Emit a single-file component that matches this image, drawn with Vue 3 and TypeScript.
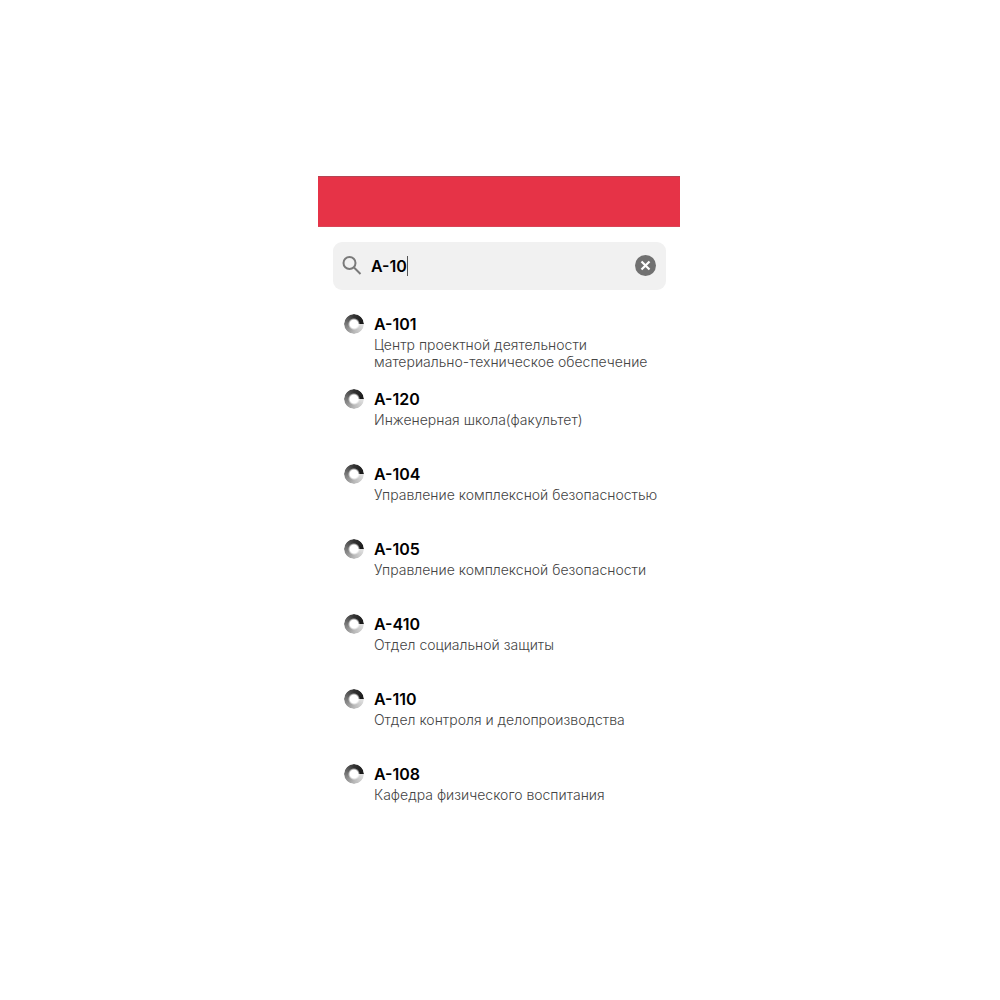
<script setup lang="ts">
import { ref } from 'vue'

interface Room {
  code: string
  name: string
}

const query = ref<string>('А-10')

const rooms: Room[] = [
  { code: 'А-101', name: 'Центр проектной деятельности материально-техническое обеспечение' },
  { code: 'А-120', name: 'Инженерная школа(факультет)' },
  { code: 'А-104', name: 'Управление комплексной безопасностью' },
  { code: 'А-105', name: 'Управление комплексной безопасности' },
  { code: 'А-410', name: 'Отдел социальной защиты' },
  { code: 'А-110', name: 'Отдел контроля и делопроизводства' },
  { code: 'А-108', name: 'Кафедра физического воспитания' },
]
</script>

<template>
  <div class="page">
    <main class="screen">
      <header class="bar"></header>
      <form class="search" @submit.prevent>
        <label class="field">
          <svg class="lens" viewBox="0 0 20 20" aria-hidden="true">
            <circle cx="7.5" cy="7" r="6" />
            <path d="M12 11.5l6.5 6.5" />
          </svg>
          <input v-model="query" class="query" type="text" aria-label="Поиск" />
          <span class="caret"></span>
        </label>
        <button class="clear" type="button" aria-label="Очистить" @click="query = ''">
          <svg viewBox="0 0 21 22" aria-hidden="true">
            <circle cx="10.5" cy="10.5" r="10.5" />
            <path d="M6.5 6.5l8 8M14.500 6.500l-8 8" />
          </svg>
        </button>
      </form>
      <ul class="rooms">
        <li v-for="room in rooms" :key="room.code" class="room">
          <span class="ring"></span>
          <div class="info">
            <h2 class="code">{{ room.code }}</h2>
            <p class="name">{{ room.name }}</p>
          </div>
        </li>
      </ul>
    </main>
  </div>
</template>

<style>
body {
  background: #ffffff;
}
</style>

<style scoped>
.page {
  padding: 176px 16px 16px 14px;
  font-family: Inter, "Noto Sans", sans-serif;
}
.screen {
  max-width: 362px;
  margin: 0 auto;
}
.bar {
  box-sizing: border-box;
  height: 51px;
  background: #e63347;
  border-top: 1px solid #b34453;
  border-bottom: 1px solid #d94557;
}
.search {
  display: flex;
  align-items: center;
  height: 48px;
  margin: 15px 14px 0 15px;
  padding: 0 10px 0 9px;
  box-sizing: border-box;
  border-radius: 9px;
  background: #f1f1f1;
}
.field {
  display: flex;
  flex: 1;
  align-items: center;
  min-width: 0;
}
.lens {
  width: 20px;
  height: 20px;
  margin-right: 9px;
  fill: none;
  stroke: #7a7a7a;
  stroke-width: 2;
}
.query {
  field-sizing: content;
  padding: 0;
  border: 0;
  outline: 0;
  background: transparent;
  color: #000000;
  caret-color: transparent;
  font: 600 16px/20px Inter, "Noto Sans", sans-serif;
}
.caret {
  width: 1px;
  height: 20px;
  background: #555555;
}
.clear {
  width: 21px;
  height: 22px;
  padding: 0;
  border: 0;
  background: none;
}
.clear svg {
  display: block;
  width: 21px;
  height: 22px;
  fill: #717171;
}
.clear path {
  fill: none;
  stroke: #ffffff;
  stroke-width: 2.2;
}
.rooms {
  margin: 24px 0 0;
  padding: 0 16px 0 26px;
  list-style: none;
}
.room {
  display: flex;
  gap: 10px;
  min-height: 75px;
}
.ring {
  flex: none;
  width: 20px;
  height: 20px;
  border-radius: 50%;
  background: conic-gradient(from 90deg, #e2e2e2, #b8b8b8 25%, #777777 50%, #333333 75%, #181818);
  mask: radial-gradient(circle, transparent 4px, #000000 6px);
}
.info {
  flex: 1;
  min-width: 0;
  margin-right: -8px;
}
.code {
  margin: 0;
  color: #000000;
  font-size: 16px;
  font-weight: 600;
  line-height: 20px;
}
.name {
  margin: 2px 0 0;
  color: #444444;
  font-size: 14px;
  font-weight: 300;
  line-height: 17px;
}
</style>
